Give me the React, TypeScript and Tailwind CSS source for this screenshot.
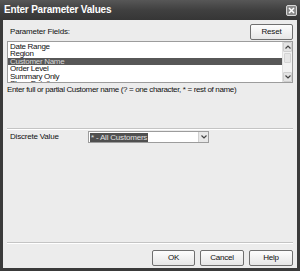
import { useState } from "react";

const fields = ["Date Range", "Region", "Customer Name", "Order Level", "Summary Only", "Show Details"];

function Btn({ label, w = "w-[43px]" }: { label: string; w?: string }) {
  return (
    <button
      className={`${w} h-[16px] flex items-center justify-center rounded-[2px] border border-[#6f6f6f] bg-gradient-to-b from-[#fdfdfd] to-[#e6e6e6] text-[8px] leading-none text-[#111] tracking-[-0.2px]`}
    >
      {label}
    </button>
  );
}

function Chevron({ up = false }: { up?: boolean }) {
  return (
    <svg width="6" height="4" viewBox="0 0 6 4" className={up ? "rotate-180" : ""}>
      <path d="M0.5 0.5 L3 3 L5.5 0.5" fill="none" stroke="#444" strokeWidth="1.2" />
    </svg>
  );
}

export default function App() {
  const [selected] = useState("Customer Name");

  return (
    <div
      className="w-[300px] h-[271px] flex flex-col bg-[#3a3a3a] overflow-hidden"
      style={{ fontFamily: '"Liberation Sans", Arial, sans-serif' }}
    >
      {/* Title bar */}
      <div className="h-[20px] flex items-center justify-between pl-[4px] pr-[3px] bg-gradient-to-b from-[#575757] via-[#404040] to-[#363636]">
        <span className="text-white font-bold text-[10px] leading-none tracking-[-0.2px]">Enter Parameter Values</span>
        <div className="w-[11px] h-[11px] rounded-[2px] border border-[#d8d8d8] bg-[#8a8a8a] flex items-center justify-center">
          <svg width="7" height="7" viewBox="0 0 7 7">
            <path d="M1 1 L6 6 M6 1 L1 6" stroke="#fff" strokeWidth="1.5" />
          </svg>
        </div>
      </div>

      {/* Body */}
      <div className="flex-1 mx-[3px] mb-[3px] bg-[#ececec] flex flex-col pl-[4px] pr-[4px] text-[#111]">
        <div className="mt-[4px] h-[15px] flex items-center justify-between">
          <span className="pl-[3px] text-[8px] leading-none tracking-[-0.2px]">Parameter Fields:</span>
          <Btn label="Reset" />
        </div>

        <div className="mt-[2px] h-[42px] flex border border-[#9c9c9c] bg-white overflow-hidden">
          <div className="flex-1 pt-[1px] overflow-hidden">
            {fields.map((f) => (
              <div
                key={f}
                className={`h-[7.4px] pl-[2px] flex items-center text-[8px] leading-[7.4px] tracking-[-0.3px] ${
                  f === selected ? "bg-[#575757] text-[#d8d8d8]" : "text-[#111]"
                }`}
              >
                {f}
              </div>
            ))}
          </div>
          <div className="w-[10px] flex flex-col bg-[#f2f2f2] border-l border-[#e0e0e0]">
            <div className="h-[10px] flex items-center justify-center bg-[#e4e4e4] border border-[#cfcfcf] rounded-[1px]">
              <Chevron up />
            </div>
            <div className="flex-1 my-[1px] mx-[1px] bg-[#e6e6e6] border border-[#d4d4d4] rounded-[1px] max-h-[14px]" />
            <div className="flex-1" />
            <div className="h-[10px] flex items-center justify-center bg-[#e4e4e4] border border-[#cfcfcf] rounded-[1px]">
              <Chevron />
            </div>
          </div>
        </div>

        <div className="mt-[2px] text-[8px] tracking-[-0.35px] leading-[9px]">
          Enter full or partial Customer name (? = one character, * = rest of name)
        </div>

        <div className="mt-[34px] h-[2px] border-t border-[#c4c4c4] border-b border-b-white" />

        <div className="mt-[1px] h-[12px] flex items-center">
          <span className="w-[81px] pl-[3px] text-[8px] leading-none tracking-[-0.2px]">Discrete Value</span>
          <div className="w-[121px] h-[12px] flex items-center border border-[#9c9c9c] bg-white">
            <div className="flex-1 pl-[1px] flex items-center">
              <span className="bg-[#505050] text-[#e0e0e0] text-[8px] tracking-[-0.2px] px-[1px] leading-[9px] inline-block">
                * - All Customers
              </span>
            </div>
            <div className="w-[10px] h-full flex items-center justify-center bg-[#e8e8e8] border-l border-[#d0d0d0]">
              <Chevron />
            </div>
          </div>
        </div>

        <div className="flex-1" />

        <div className="h-[2px] border-t border-[#c4c4c4] border-b border-b-white" />

        <div className="mt-[6px] mb-[2px] flex justify-end gap-[5px]">
          <Btn label="OK" />
          <Btn label="Cancel" w="w-[44px]" />
          <Btn label="Help" w="w-[44px]" />
        </div>
      </div>
    </div>
  );
}
